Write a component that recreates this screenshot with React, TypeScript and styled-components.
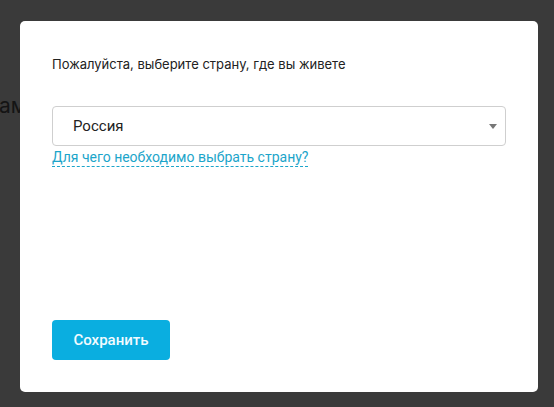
import * as React from 'react';
import styled, {createGlobalStyle} from 'styled-components';

const GlobalStyle = createGlobalStyle`
  html, body {
    margin: 0;
    padding: 0;
    background: #3a3a3a;
  }
  body {
    font-family: Roboto, "Liberation Sans", Arial, sans-serif;
  }
`;

const Page = styled.div`
  position: relative;
  width: 554px;
  height: 407px;
  overflow: hidden;
  background: #3a3a3a;
`;

const BackgroundText = styled.div`
  padding-top: 93px;
  margin-left: -1px;
  font-family: Inter, "Liberation Sans", sans-serif;
  font-size: 21px;
  color: #141414;
`;

const Overlay = styled.div`
  position: absolute;
  inset: 0;
  padding: 21px 16px 15px 20px;
  box-sizing: border-box;
`;

const Modal = styled.div`
  width: 518px;
  height: 371px;
  box-sizing: border-box;
  background: #fff;
  border-radius: 5px;
  padding: 32px;
  display: flex;
  flex-direction: column;
`;

const Title = styled.p`
  margin: 0;
  padding-top: 2px;
  font-family: Inter, "Noto Sans", sans-serif;
  font-size: 13px;
  line-height: 18px;
  color: #222;
`;

const SelectBox = styled.div`
  margin-top: 33px;
  height: 40px;
  box-sizing: border-box;
  border: 1px solid #cfcfcf;
  border-radius: 4px;
  display: flex;
  align-items: center;
  justify-content: space-between;
  padding: 0 8px 0 20px;
`;

const SelectValue = styled.span`
  font-size: 15px;
  color: #222;
`;

const Caret = styled.span`
  width: 0;
  height: 0;
  border-left: 4px solid transparent;
  border-right: 4px solid transparent;
  border-top: 5px solid #777;
`;

const HelpLink = styled.a`
  align-self: flex-start;
  margin-top: 3px;
  font-size: 14px;
  line-height: 17px;
  color: #1ca5ca;
  text-decoration: none;
  border-bottom: 1px dashed #1ca5ca;
  cursor: pointer;
`;

const Spacer = styled.div`
  flex: 1;
`;

const SaveButton = styled.button`
  align-self: flex-start;
  width: 118px;
  height: 40px;
  border: none;
  border-radius: 4px;
  background: #0aaee0;
  color: #f2fbff;
  font-family: Roboto, "Liberation Sans", sans-serif;
  font-weight: 500;
  font-size: 15px;
  cursor: pointer;
`;

export default function App() {
  return (
    <Page>
      <GlobalStyle />
      <BackgroundText>ам</BackgroundText>
      <Overlay>
        <Modal>
          <Title>Пожалуйста, выберите страну, где вы живете</Title>
          <SelectBox>
            <SelectValue>Россия</SelectValue>
            <Caret />
          </SelectBox>
          <HelpLink>Для чего необходимо выбрать страну?</HelpLink>
          <Spacer />
          <SaveButton>Сохранить</SaveButton>
        </Modal>
      </Overlay>
    </Page>
  );
}
